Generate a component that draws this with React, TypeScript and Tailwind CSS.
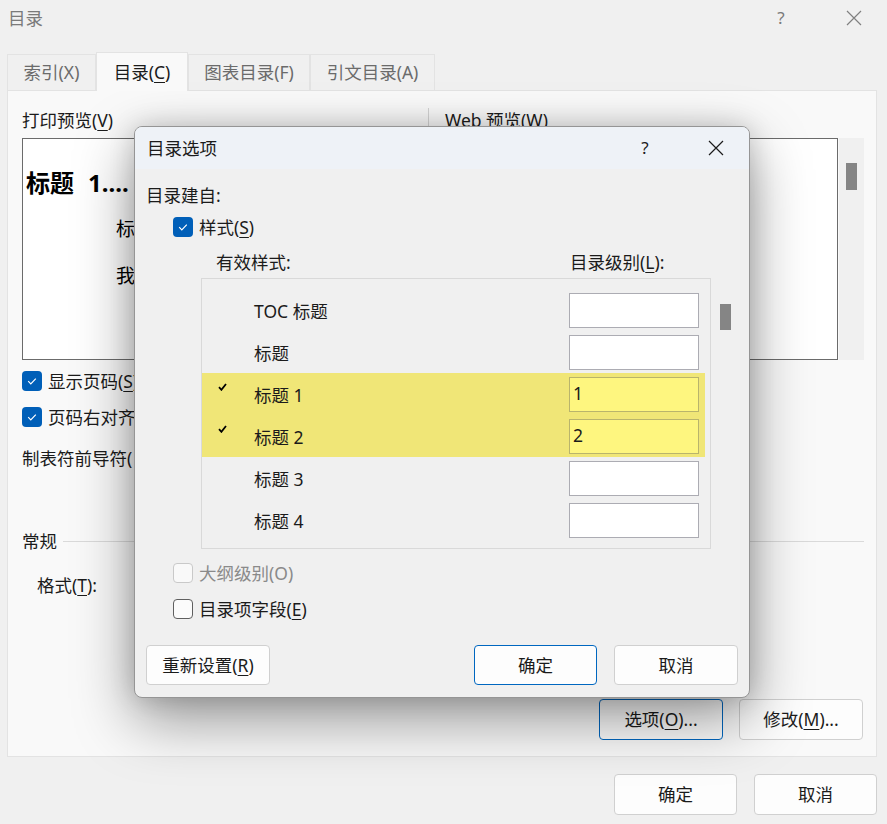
import React from 'react';

type CheckState = 'on' | 'off' | 'disabled';

function Mn({ children }: { children: React.ReactNode }) {
  return <span className="underline decoration-1 underline-offset-[3px]">{children}</span>;
}

function CheckBox({ state }: { state: CheckState }) {
  if (state === 'on') {
    return (
      <div className="flex h-[20px] w-[20px] shrink-0 items-center justify-center rounded-[4px] bg-[#005fb8]">
        <svg width="20" height="20" viewBox="0 0 20 20">
          <polyline points="6.2,10.2 8.8,12.8 13.8,7.6" fill="none" stroke="#ffffff" strokeWidth="1.2" />
        </svg>
      </div>
    );
  }
  return (
    <div
      className={
        state === 'disabled'
          ? 'h-[20px] w-[20px] shrink-0 rounded-[4px] border border-[#c9c9c9] bg-[#f9f9f9]'
          : 'h-[20px] w-[20px] shrink-0 rounded-[4px] border border-[#5f5f5f] bg-[#fbfbfb]'
      }
    />
  );
}

function Btn({ children, w, primary }: { children: React.ReactNode; w: string; primary?: boolean }) {
  return (
    <div
      className={`flex h-full items-center justify-center rounded-[4px] border bg-[#fdfdfd] ${w} ${
        primary ? 'border-[#0067c0]' : 'border-[#d0d0d0]'
      }`}
    >
      {children}
    </div>
  );
}

function CloseIcon({ color }: { color: string }) {
  return (
    <svg width="16" height="16" viewBox="0 0 16 16">
      <path d="M1 1 L15 15 M15 1 L1 15" stroke={color} strokeWidth="1.2" fill="none" />
    </svg>
  );
}

const styles = [
  { name: 'TOC 标题', level: '', on: false },
  { name: '标题', level: '', on: false },
  { name: '标题 1', level: '1', on: true },
  { name: '标题 2', level: '2', on: true },
  { name: '标题 3', level: '', on: false },
  { name: '标题 4', level: '', on: false },
];

const tabs = [
  { label: '索引', key: 'X', w: 'w-[89px]' },
  { label: '目录', key: 'C', w: 'w-[92px]', active: true },
  { label: '图表目录', key: 'F', w: 'w-[122px]' },
  { label: '引文目录', key: 'A', w: 'w-[125px]' },
];

function OptionsDialog() {
  return (
    <div className="absolute left-[134px] top-[126px] flex h-[572px] w-[616px] flex-col overflow-hidden rounded-[8px] border border-[#959595] bg-[#f0f0f0] text-[#1b1b1b] shadow-[0_22px_60px_rgba(0,0,0,0.4),0_0_26px_rgba(0,0,0,0.16)]">
      <div className="flex h-[42px] shrink-0 items-center bg-[#eef2f7] pl-[12px] pr-[25px]">
        <span className="leading-[24px]">目录选项</span>
        <span className="ml-auto w-[16px] text-center text-[17px]">?</span>
        <div className="ml-[55px]">
          <CloseIcon color="#1b1b1b" />
        </div>
      </div>

      <div className="flex flex-1 flex-col px-[11px] pt-[14px]">
        <div className="h-[24px] leading-[24px]">目录建自:</div>

        <div className="mt-[10px] flex h-[20px] items-center gap-[6px] pl-[27px]">
          <CheckBox state="on" />
          <span className="leading-[24px]">
            样式(<Mn>S</Mn>)
          </span>
        </div>

        <div className="mt-[13px] flex h-[24px] pl-[70px] leading-[24px]">
          <span className="w-[354px]">有效样式:</span>
          <span>
            目录级别(<Mn>L</Mn>):
          </span>
        </div>

        <div className="mt-[4px] flex pl-[55px]">
          <div className="h-[271px] w-[512px] overflow-hidden border border-[#d9d9d9] pt-[10px]">
            {styles.map((s) => (
              <div
                key={s.name}
                className={`flex h-[42px] w-[503px] items-center ${s.on ? 'bg-[#f0e677]' : ''}`}
              >
                <div className="flex w-[52px] shrink-0 pl-[16px]">
                  {s.on && (
                    <svg width="9" height="8" viewBox="0 0 9 8" className="mb-[14px]">
                      <polyline points="1,4.2 3.4,6.8 8,1" fill="none" stroke="#000" strokeWidth="1.8" />
                    </svg>
                  )}
                </div>
                <span className="flex-1 pt-[1px] leading-[24px]">{s.name}</span>
                <div
                  className={`mr-[6px] h-[35px] w-[130px] border pl-[3px] leading-[31px] ${
                    s.on ? 'border-[#b9b46c] bg-[#fef67f]' : 'border-[#acacb3] bg-white'
                  }`}
                >
                  {s.level}
                </div>
              </div>
            ))}
          </div>
          <div className="w-[27px] pl-[9px] pt-[26px]">
            <div className="h-[26px] w-[11px] bg-[#858585]" />
          </div>
        </div>

        <div className="mt-[14px] flex h-[20px] items-center gap-[6px] pl-[27px]">
          <CheckBox state="disabled" />
          <span className="leading-[24px] text-[#8a8a8a]">大纲级别(O)</span>
        </div>

        <div className="mt-[16px] flex h-[20px] items-center gap-[6px] pl-[27px]">
          <CheckBox state="off" />
          <span className="leading-[24px]">
            目录项字段(<Mn>E</Mn>)
          </span>
        </div>

        <div className="mt-[26px] flex h-[40px] gap-[17px]">
          <Btn w="w-[124px]">
            重新设置(<Mn>R</Mn>)
          </Btn>
          <div className="flex-1" />
          <Btn w="w-[123px]" primary>
            确定
          </Btn>
          <Btn w="w-[124px]">取消</Btn>
        </div>
      </div>
    </div>
  );
}

export default function App() {
  return (
    <div className="relative flex h-[824px] w-[887px] flex-col overflow-hidden bg-[#f0f0f0] font-['Noto_Sans','Noto_Sans_CJK_SC',sans-serif] text-[17.5px] text-[#1b1b1b]">
      {/* title bar */}
      <div className="flex h-[36px] shrink-0 items-center pl-[8px] pr-[21px] text-[#7a7a7a]">
        <span className="leading-[24px]">目录</span>
        <span className="ml-auto w-[24px] text-center text-[17px]">?</span>
        <div className="ml-[49px] flex w-[24px] justify-center">
          <CloseIcon color="#808080" />
        </div>
      </div>

      {/* tabs */}
      <div className="mt-[16px] flex h-[38px] items-end pl-[7px]">
        {tabs.map((t) => (
          <div
            key={t.label}
            className={`flex items-center justify-center border border-b-0 border-[#e3e3e3] ${t.w} ${
              t.active
                ? 'relative z-10 mb-[-1px] h-[39px] bg-[#f9f9f9] text-[#1b1b1b]'
                : 'h-[36px] bg-[#f0f0f0] text-[#6b6b6b]'
            }`}
          >
            {t.label}(
            {t.active ? <Mn>{t.key}</Mn> : t.key})
          </div>
        ))}
      </div>

      {/* tab panel */}
      <div className="ml-[7px] flex h-[667px] w-[870px] flex-col border border-[#e3e3e3] bg-[#f9f9f9] pl-[14px] pr-[12px] pt-[17px]">
        <div className="flex h-[252px]">
          <div className="flex w-[401px] flex-col">
            <div className="h-[24px] leading-[24px]">
              打印预览(<Mn>V</Mn>)
            </div>
            <div className="mt-[6px] h-[222px] overflow-hidden border border-[#6b6b6b] bg-white pl-[3px] pt-[27px]">
              <div className="flex h-[34px] items-center text-[24px] font-bold leading-[34px] text-black">
                <span>标题</span>
                <span className="ml-[14px]">1....</span>
              </div>
              <div className="ml-[90px] mt-[16px] text-[19px] leading-[26px] text-black">标</div>
              <div className="ml-[90px] mt-[21px] text-[19px] leading-[26px] text-black">我</div>
            </div>
          </div>
          <div className="ml-[5px] w-px bg-[#d4d4d4]" />
          <div className="ml-[16px] flex w-[419px] flex-col">
            <div className="h-[24px] leading-[24px]">
              Web 预览(<Mn>W</Mn>)
            </div>
            <div className="mt-[6px] flex h-[222px] gap-px">
              <div className="w-[394px] border border-[#6b6b6b] bg-white" />
              <div className="w-[25px] bg-[#f0f0f0] pl-[7px] pt-[25px]">
                <div className="h-[27px] w-[11px] bg-[#858585]" />
              </div>
            </div>
          </div>
        </div>

        <div className="mt-[11px] flex h-[20px] items-center gap-[6px]">
          <CheckBox state="on" />
          <span className="leading-[24px]">
            显示页码(<Mn>S</Mn>)
          </span>
        </div>
        <div className="mt-[16px] flex h-[20px] items-center gap-[6px]">
          <CheckBox state="on" />
          <span className="leading-[24px]">页码右对齐</span>
        </div>
        <div className="mt-[19px] h-[24px] leading-[24px]">制表符前导符(</div>

        <div className="mt-[59px] flex h-[24px] items-center">
          <span className="leading-[24px]">常规</span>
          <div className="ml-[6px] h-px flex-1 bg-[#dadada]" />
        </div>
        <div className="mt-[20px] h-[24px] pl-[15px] leading-[24px]">
          格式(<Mn>T</Mn>):
        </div>

        <div className="mt-[102px] flex h-[41px] justify-end gap-[16px] pr-px">
          <Btn w="w-[124px]" primary>
            选项(<Mn>O</Mn>)...
          </Btn>
          <Btn w="w-[124px]">
            修改(<Mn>M</Mn>)...
          </Btn>
        </div>
      </div>

      {/* bottom buttons */}
      <div className="mt-[17px] flex h-[41px] justify-end gap-[17px] pr-[10px]">
        <Btn w="w-[123px]">确定</Btn>
        <Btn w="w-[123px]">取消</Btn>
      </div>

      <OptionsDialog />
    </div>
  );
}
